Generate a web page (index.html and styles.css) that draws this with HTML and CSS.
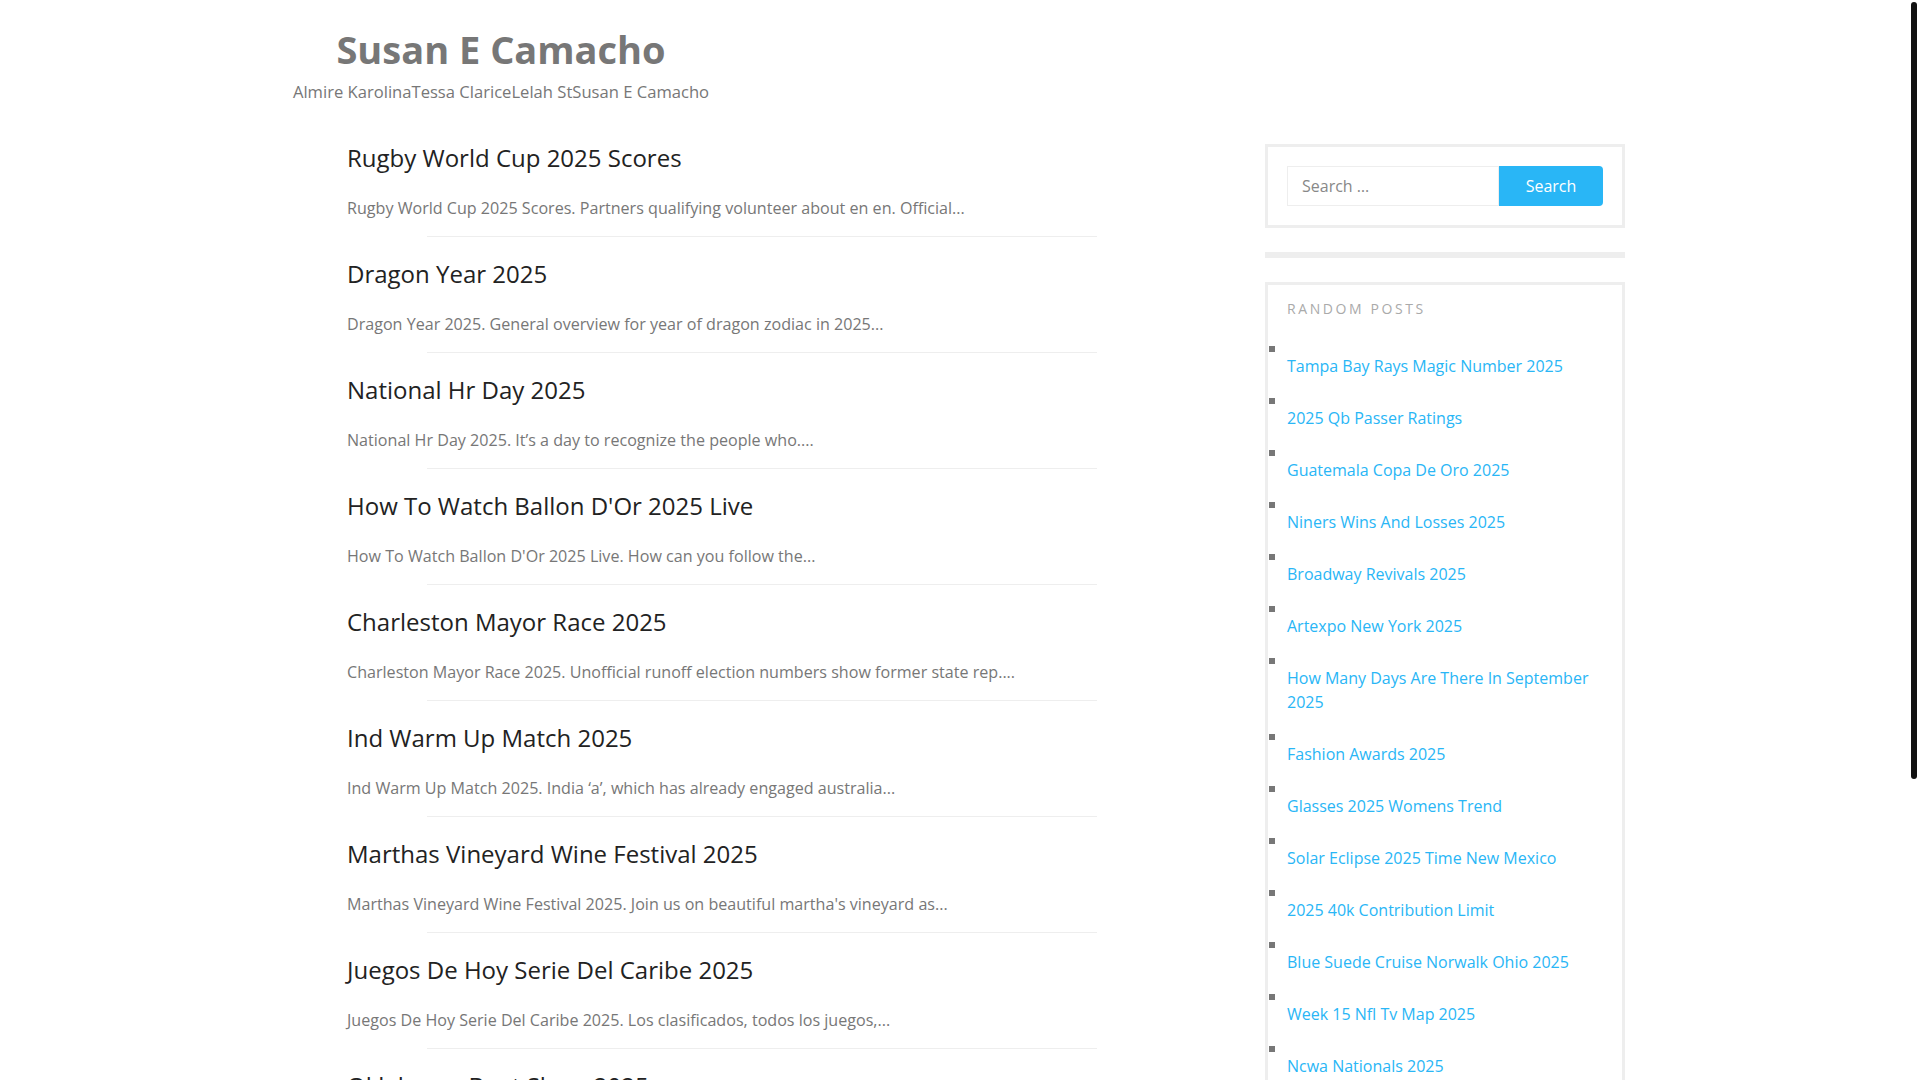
FILE: index.html
```html
<!DOCTYPE html>
<html lang="en">
<head>
    <meta charset="UTF-8">
    <meta name="viewport" content="width=device-width, initial-scale=1.0">
    <title>Susan E Camacho</title>
    <link rel="stylesheet" href="styles.css">
</head>
<body>
    <div class="site">
        <header class="site-header">
            <div class="branding">
                <h1 class="site-title">Susan E Camacho</h1>
                <nav class="site-nav">
                    <a href="#">Almire Karolina</a><a href="#">Tessa Clarice</a><a href="#">Lelah St</a><a href="#">Susan E Camacho</a>
                </nav>
            </div>
        </header>

        <div class="content-row">
            <main class="posts">
                <article class="post">
                    <h2 class="post-title"><a href="#">Rugby World Cup 2025 Scores</a></h2>
                    <p class="post-excerpt">Rugby World Cup 2025 Scores. Partners qualifying volunteer about en en. Official...</p>
                    <div class="post-sep"></div>
                </article>
                <article class="post">
                    <h2 class="post-title"><a href="#">Dragon Year 2025</a></h2>
                    <p class="post-excerpt">Dragon Year 2025. General overview for year of dragon zodiac in 2025...</p>
                    <div class="post-sep"></div>
                </article>
                <article class="post">
                    <h2 class="post-title"><a href="#">National Hr Day 2025</a></h2>
                    <p class="post-excerpt">National Hr Day 2025. It’s a day to recognize the people who....</p>
                    <div class="post-sep"></div>
                </article>
                <article class="post">
                    <h2 class="post-title"><a href="#">How To Watch Ballon D'Or 2025 Live</a></h2>
                    <p class="post-excerpt">How To Watch Ballon D'Or 2025 Live. How can you follow the...</p>
                    <div class="post-sep"></div>
                </article>
                <article class="post">
                    <h2 class="post-title"><a href="#">Charleston Mayor Race 2025</a></h2>
                    <p class="post-excerpt">Charleston Mayor Race 2025. Unofficial runoff election numbers show former state rep....</p>
                    <div class="post-sep"></div>
                </article>
                <article class="post">
                    <h2 class="post-title"><a href="#">Ind Warm Up Match 2025</a></h2>
                    <p class="post-excerpt">Ind Warm Up Match 2025. India ‘a’, which has already engaged australia...</p>
                    <div class="post-sep"></div>
                </article>
                <article class="post">
                    <h2 class="post-title"><a href="#">Marthas Vineyard Wine Festival 2025</a></h2>
                    <p class="post-excerpt">Marthas Vineyard Wine Festival 2025. Join us on beautiful martha's vineyard as...</p>
                    <div class="post-sep"></div>
                </article>
                <article class="post">
                    <h2 class="post-title"><a href="#">Juegos De Hoy Serie Del Caribe 2025</a></h2>
                    <p class="post-excerpt">Juegos De Hoy Serie Del Caribe 2025. Los clasificados, todos los juegos,...</p>
                    <div class="post-sep"></div>
                </article>
                <article class="post">
                    <h2 class="post-title"><a href="#">Oklahoma Boat Show 2025</a></h2>
                    <p class="post-excerpt">Oklahoma Boat Show 2025. Find boats, dealers and seminars at the show...</p>
                    <div class="post-sep"></div>
                </article>
            </main>

            <aside class="sidebar">
                <div class="widget search-widget">
                    <form class="search-form" onsubmit="return false">
                        <input type="search" class="search-field" placeholder="Search …">
                        <button type="submit" class="search-submit">Search</button>
                    </form>
                </div>
                <div class="widget empty-widget"></div>
                <div class="widget random-posts">
                    <h3 class="widget-title">Random Posts</h3>
                    <ul>
                        <li><a href="#">Tampa Bay Rays Magic Number 2025</a></li>
                        <li><a href="#">2025 Qb Passer Ratings</a></li>
                        <li><a href="#">Guatemala Copa De Oro 2025</a></li>
                        <li><a href="#">Niners Wins And Losses 2025</a></li>
                        <li><a href="#">Broadway Revivals 2025</a></li>
                        <li><a href="#">Artexpo New York 2025</a></li>
                        <li><a href="#">How Many Days Are There In September 2025</a></li>
                        <li><a href="#">Fashion Awards 2025</a></li>
                        <li><a href="#">Glasses 2025 Womens Trend</a></li>
                        <li><a href="#">Solar Eclipse 2025 Time New Mexico</a></li>
                        <li><a href="#">2025 40k Contribution Limit</a></li>
                        <li><a href="#">Blue Suede Cruise Norwalk Ohio 2025</a></li>
                        <li><a href="#">Week 15 Nfl Tv Map 2025</a></li>
                        <li><a href="#">Ncwa Nationals 2025</a></li>
                    </ul>
                </div>
            </aside>
        </div>
    </div>
    <div class="scroll-thumb"></div>
</body>
</html>
```

FILE: styles.css
```css
body {
    margin: 0;
    font-family: "Open Sans", "Liberation Sans", sans-serif;
    font-size: 16px;
    color: #777;
    background: #fff;
}
a {
    text-decoration: none;
}
.site {
    width: 1330px;
    margin: 0 auto;
}
.site-header {
    padding-top: 27px;
}
.branding {
    width: 412px;
    display: flex;
    flex-direction: column;
    align-items: center;
}
.site-title {
    margin: 0;
    font-size: 38px;
    line-height: 45px;
    font-weight: 700;
    color: #777;
}
.site-nav {
    margin-top: 8px;
    font-size: 16.6px;
    line-height: 24px;
    white-space: nowrap;
}
.site-nav a {
    color: #777;
}
.content-row {
    display: flex;
    justify-content: space-between;
    padding-top: 38px;
}
.posts {
    width: 830px;
    padding-left: 52px;
}
.post-title {
    margin: 0 0 22px;
    font-size: 24px;
    line-height: 32px;
    font-weight: 400;
}
.post-title a {
    color: #222;
}
.post-excerpt {
    margin: 0 0 16px;
    font-size: 16.1px;
    line-height: 24px;
    color: #777;
}
.post-sep {
    height: 1px;
    background: #eee;
    margin: 0 80px 21px;
}
.sidebar {
    width: 360px;
    margin-top: 2px;
}
.widget {
    border: 3px solid #eee;
    margin-bottom: 24px;
}
.search-widget {
    padding: 19px;
}
.search-form {
    display: flex;
}
.search-field {
    width: 212px;
    height: 40px;
    box-sizing: border-box;
    border: 1px solid #eee;
    padding: 0 14px;
    font-family: inherit;
    font-size: 16px;
    color: #555;
    outline: none;
}
.search-field::placeholder {
    color: #888;
}
.search-submit {
    flex: 1;
    height: 40px;
    border: none;
    border-radius: 0 4px 4px 0;
    background: #29b6f6;
    color: #fff;
    font-family: inherit;
    font-size: 16px;
    cursor: pointer;
}
.empty-widget {
    height: 0;
}
.random-posts {
    padding: 14px 19px 0;
}
.widget-title {
    margin: 0 0 27px;
    font-size: 14px;
    line-height: 20px;
    font-weight: 400;
    text-transform: uppercase;
    letter-spacing: 2.6px;
    color: #aaa;
}
.random-posts ul {
    margin: 0;
    padding: 0;
    list-style: none;
}
.random-posts li {
    margin-bottom: 20px;
}
.random-posts li::before {
    content: "";
    display: block;
    width: 6px;
    height: 6px;
    margin: 0 0 2px -18px;
    background: #777;
}
.random-posts li a {
    display: block;
    line-height: 24px;
    color: #29b6f6;
}
.scroll-thumb {
    position: fixed;
    top: 2px;
    right: 3px;
    width: 6px;
    height: 777px;
    border-radius: 3px;
    background: #111;
}
```
